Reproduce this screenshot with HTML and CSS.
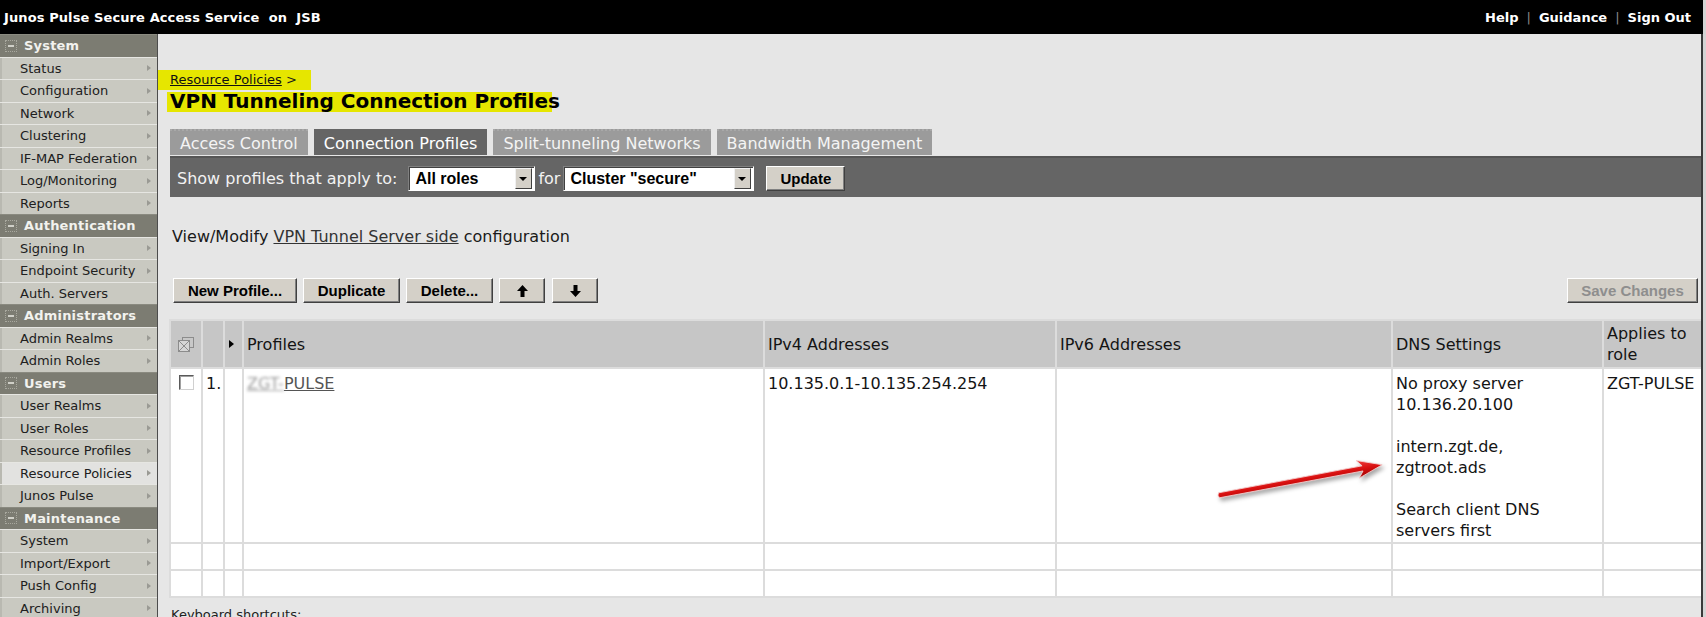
FILE: index.html
```html
<!DOCTYPE html>
<html lang="en">
<head>
<meta charset="utf-8">
<title>VPN Tunneling Connection Profiles</title>
<link rel="stylesheet" href="styles.css">
</head>
<body>
<header class="topbar">
  <div class="brand">Junos Pulse Secure Access Service&nbsp; on&nbsp; JSB</div>
  <div class="toplinks"><a href="#">Help</a><span class="sep">|</span><a href="#">Guidance</a><span class="sep">|</span><a href="#">Sign Out</a></div>
</header>
<div class="layout">
  <nav class="sidebar">
    <div class="sec"><span class="box"></span>System</div>
    <div class="item">Status<span class="caret"></span></div>
    <div class="item">Configuration<span class="caret"></span></div>
    <div class="item">Network<span class="caret"></span></div>
    <div class="item">Clustering<span class="caret"></span></div>
    <div class="item">IF-MAP Federation<span class="caret"></span></div>
    <div class="item">Log/Monitoring<span class="caret"></span></div>
    <div class="item">Reports<span class="caret"></span></div>
    <div class="sec"><span class="box"></span>Authentication</div>
    <div class="item">Signing In<span class="caret"></span></div>
    <div class="item">Endpoint Security<span class="caret"></span></div>
    <div class="item">Auth. Servers</div>
    <div class="sec"><span class="box"></span>Administrators</div>
    <div class="item">Admin Realms<span class="caret"></span></div>
    <div class="item">Admin Roles<span class="caret"></span></div>
    <div class="sec"><span class="box"></span>Users</div>
    <div class="item">User Realms<span class="caret"></span></div>
    <div class="item">User Roles<span class="caret"></span></div>
    <div class="item">Resource Profiles<span class="caret"></span></div>
    <div class="item active">Resource Policies<span class="caret"></span></div>
    <div class="item">Junos Pulse<span class="caret"></span></div>
    <div class="sec"><span class="box"></span>Maintenance</div>
    <div class="item">System<span class="caret"></span></div>
    <div class="item">Import/Export<span class="caret"></span></div>
    <div class="item">Push Config<span class="caret"></span></div>
    <div class="item">Archiving<span class="caret"></span></div>
  </nav>
  <main class="main">
    <div class="crumb"><span class="hl-crumb"><a href="#">Resource Policies</a> &gt;</span></div>
    <h1 class="title"><span class="hl-title">VPN Tunneling Connection Profiles</span></h1>
    <div class="tabs">
      <span class="tab">Access Control</span>
      <span class="tab current">Connection Profiles</span>
      <span class="tab">Split-tunneling Networks</span>
      <span class="tab">Bandwidth Management</span>
    </div>
    <div class="filterbar">
      <span class="flabel">Show profiles that apply to:</span>
      <span class="select sel-roles"><span class="sel-text">All roles</span><span class="sel-btn"></span></span>
      <span class="flabel for">for</span>
      <span class="select sel-cluster"><span class="sel-text">Cluster "secure"</span><span class="sel-btn"></span></span>
      <button class="btn update">Update</button>
    </div>
    <p class="intro">View/Modify <a href="#">VPN Tunnel Server side</a> configuration</p>
    <div class="actions">
      <div class="btn-group">
        <button class="btn">New Profile...</button>
        <button class="btn">Duplicate</button>
        <button class="btn">Delete...</button>
        <button class="btn arrow-btn"><svg width="11" height="12" viewBox="0 0 11 12"><path d="M5.5 0 L11 6 H7.5 V12 H3.5 V6 H0 Z" fill="#000"/></svg></button>
        <button class="btn arrow-btn"><svg width="11" height="12" viewBox="0 0 11 12"><path d="M5.5 12 L11 6 H7.5 V0 H3.5 V6 H0 Z" fill="#000"/></svg></button>
      </div>
      <button class="btn disabled">Save Changes</button>
    </div>
    <table class="grid">
      <thead>
        <tr>
          <th class="c-cb"><svg class="selall" width="16" height="15" viewBox="0 0 16 15"><rect x="4.5" y="0.5" width="11" height="10" fill="#c8c8c8" stroke="#8c8c8c"/><rect x="0.5" y="3.5" width="11" height="11" fill="#d6d6d6" stroke="#8c8c8c"/><path d="M1 4 L11 14 M11 4 L1 14" stroke="#8c8c8c"/></svg></th>
          <th class="c-num"></th>
          <th class="c-arr"><span class="tri"></span></th>
          <th class="c-prof">Profiles</th>
          <th class="c-v4">IPv4 Addresses</th>
          <th class="c-v6">IPv6 Addresses</th>
          <th class="c-dns">DNS Settings</th>
          <th class="c-role">Applies to role</th>
        </tr>
      </thead>
      <tbody>
        <tr class="row-main">
          <td class="c-cb"><span class="chk"></span></td>
          <td>1.</td>
          <td></td>
          <td><span class="blur">ZGT-</span><a href="#" class="plink">PULSE</a></td>
          <td>10.135.0.1-10.135.254.254</td>
          <td></td>
          <td>No proxy server<br>10.136.20.100<br><br>intern.zgt.de,<br>zgtroot.ads<br><br>Search client DNS servers first</td>
          <td>ZGT-PULSE</td>
        </tr>
        <tr class="row-empty"><td></td><td></td><td></td><td></td><td></td><td></td><td></td><td></td></tr>
        <tr class="row-empty"><td></td><td></td><td></td><td></td><td></td><td></td><td></td><td></td></tr>
      </tbody>
    </table>
    <p class="shortcuts">Keyboard shortcuts:</p>
  </main>
</div>
<svg class="annot-arrow" width="200" height="80" viewBox="0 0 200 80">
  <defs>
    <linearGradient id="ar" x1="0" y1="0" x2="0" y2="1">
      <stop offset="0" stop-color="#f04040"/>
      <stop offset="0.5" stop-color="#d81010"/>
      <stop offset="1" stop-color="#a00000"/>
    </linearGradient>
  </defs>
  <g transform="translate(19,55) rotate(-10.5)">
    <path d="M0 -2.2 L146 -2.6 L141 -9 L166 0 L141 9 L146 2.6 L0 2.8 Q-2 0 0 -2.2 Z" fill="url(#ar)" stroke="#f4d0d0" stroke-width="0.8"/>
  </g>
</svg>
</body>
</html>
```
FILE: styles.css
```css
* { box-sizing: border-box; }

html, body {
  margin: 0;
  padding: 0;
}

body {
  position: relative;
  width: 1706px;
  height: 617px;
  overflow: hidden;
  background: #d4d4d4;
  font-family: "DejaVu Sans", Verdana, sans-serif;
  color: #1a1a1a;
}

a { color: inherit; }

/* ---------- top bar ---------- */
.topbar {
  height: 34px;
  background: #000;
  color: #fff;
  display: flex;
  align-items: center;
  justify-content: space-between;
  padding: 0 12px 0 4px;
  font-weight: bold;
  font-size: 13px;
  margin-right: 3px;
}
.brand { letter-spacing: 0.1px; }
.toplinks a { color: #fff; text-decoration: none; }
.toplinks .sep { color: #8a8a8a; margin: 0 8px; font-weight: normal; }

/* ---------- layout ---------- */
.layout {
  display: flex;
  height: 583px;
}

/* ---------- sidebar ---------- */
.sidebar {
  flex: none;
  width: 158px;
  background: #c9c9c1;
  border-right: 1px solid #4c4c4c;
  overflow: hidden;
}
.sec {
  height: 22.5px;
  display: flex;
  align-items: center;
  background: #7c7c72;
  color: #f2f2ee;
  font-weight: bold;
  font-size: 13px;
  padding-left: 5px;
  letter-spacing: 0.2px;
  border-top: 1px solid #8a8a80;
}
.box {
  position: relative;
  width: 12px;
  height: 12px;
  border: 1px dotted #a8a89e;
  margin-right: 7px;
  flex: none;
}
.box::after {
  content: "";
  position: absolute;
  left: 2px;
  right: 2px;
  top: 4px;
  height: 2px;
  background: #d0d0c8;
}
.item {
  height: 22.5px;
  display: flex;
  align-items: center;
  justify-content: space-between;
  padding: 0 6px 0 20px;
  font-size: 13px;
  color: #202020;
  border-top: 1px solid #e6e6e2;
  box-shadow: inset 2px 0 0 #b9b9b1;
}
.item.active {
  background: #e2e2e0;
}
.caret {
  width: 0;
  height: 0;
  border-left: 4px solid #9a9a94;
  border-top: 3px solid transparent;
  border-bottom: 3px solid transparent;
}

/* ---------- main ---------- */
.main {
  flex: 1;
  min-width: 0;
  background: #e6e6e6;
  border-right: 2px solid #3a3a3a;
  margin-right: 3px;
  padding: 36px 0 0 12px;
  overflow: hidden;
}

.crumb {
  font-size: 13px;
  line-height: 20px;
  height: 20px;
}
.hl-crumb {
  background: #e6e600;
  padding: 2px 14px 3px 13px;
  margin-left: -13px;
}
.crumb a { color: #111; }

.title {
  margin: 0;
  font-size: 20px;
  line-height: 22px;
  font-weight: bold;
  color: #000;
}
.hl-title {
  background: linear-gradient(#e6e600, #e6e600) no-repeat;
  background-size: calc(100% - 8px) 20px;
  background-position: 0 3px;
  padding-left: 3px;
  margin-left: -3px;
}

.tabs {
  display: flex;
  gap: 6px;
  margin-top: 17px;
}
.tab {
  height: 26px;
  line-height: 26px;
  padding: 0 10px;
  font-size: 16px;
  color: #f4f4f4;
  background: #9b9b9b;
  border-top: 2px dotted #a8a8a8;
}
.tab.current {
  background: #656565;
  border-top-color: #656565;
  color: #fff;
}

.filterbar {
  margin-top: 1px;
  height: 41px;
  background: #656565;
  border-top: 2px solid #555;
  display: flex;
  align-items: center;
  padding: 1px 0 0 7px;
}
.flabel {
  color: #f2f2f2;
  font-size: 16px;
  margin-right: 11px;
}
.flabel.for { margin: 0 3px; }

.select {
  display: inline-flex;
  align-items: center;
  justify-content: space-between;
  height: 25px;
  background: #fff;
  border: 1px solid;
  border-color: #808080 #fff #fff #808080;
  box-shadow: inset 1px 1px 0 #404040;
  padding: 2px 2px 1px 6px;
}
.sel-roles { width: 127px; }
.sel-cluster { width: 191px; }
.sel-text {
  font-family: "Liberation Sans", Arial, sans-serif;
  font-weight: bold;
  font-size: 16px;
  color: #000;
}
.sel-btn {
  position: relative;
  width: 17px;
  height: 21px;
  background: #d4d0c8;
  border: 1px solid;
  border-color: #f0f0f0 #404040 #404040 #f0f0f0;
}
.sel-btn::after {
  content: "";
  position: absolute;
  left: 3px;
  top: 8px;
  border-top: 4px solid #000;
  border-left: 4px solid transparent;
  border-right: 4px solid transparent;
}

.btn {
  height: 25px;
  padding: 0 13px;
  font-family: "Liberation Sans", Arial, sans-serif;
  font-weight: bold;
  font-size: 15px;
  color: #000;
  background: #d4d0c8;
  border: 1px solid;
  border-color: #fff #404040 #404040 #fff;
  box-shadow: inset -1px -1px 0 #808080;
  border-radius: 0;
  cursor: default;
}
.btn.update { margin-left: 12px; width: 79px; padding: 0; }
.btn.disabled { color: #8e8e8e; width: 131px; padding: 0; }

.intro {
  margin: 30px 0 0 2px;
  font-size: 16px;
  line-height: 20px;
  color: #1a1a1a;
}
.intro a { color: #333; }

.actions {
  margin-top: 31px;
  display: flex;
  justify-content: space-between;
  padding: 0 3px 0 3px;
}
.btn-group { display: flex; gap: 6px; }
.btn-group .btn:nth-child(1) { width: 124px; padding: 0; }
.btn-group .btn:nth-child(2) { width: 97px; padding: 0; }
.btn-group .btn:nth-child(3) { width: 87px; padding: 0; }
.arrow-btn {
  width: 46px;
  padding: 0;
  display: flex;
  align-items: center;
  justify-content: center;
}
.btn-group .arrow-btn:last-child { margin-left: 1px; }

/* ---------- table ---------- */
.grid {
  margin: 16px 0 0 -1px;
  width: calc(100% + 4px);
  table-layout: fixed;
  border-collapse: separate;
  border-spacing: 2px;
  background: #dcdcdc;
  font-size: 16px;
  color: #141414;
}
.grid th, .grid td {
  box-sizing: border-box;
  padding: 0 3px;
  text-align: left;
  font-weight: normal;
}
.grid th {
  height: 46px;
  background: #c6c6c6;
  vertical-align: middle;
  line-height: 21px;
}
.c-cb { width: 30px; }
.c-num { width: 20px; }
.c-arr { width: 17px; }
.c-prof { width: 519px; }
.c-v4 { width: 290px; }
.c-v6 { width: 334px; }
.c-dns { width: 209px; }
.grid th.c-cb { padding: 0 0 0 7px; }
.selall { display: block; }
.grid th.c-arr { padding: 0 0 0 4px; }
.tri {
  display: block;
  width: 0;
  height: 0;
  border-left: 5px solid #000;
  border-top: 4px solid transparent;
  border-bottom: 4px solid transparent;
}
.grid td {
  background: #fff;
  vertical-align: top;
  line-height: 21px;
}
.row-main td {
  height: 173px;
  padding-top: 4px;
}
.row-main td.c-cb { padding: 6px 0 0 8px; }
.chk {
  display: block;
  width: 15px;
  height: 15px;
  background: #fff;
  border: 1px solid;
  border-color: #5a5a5a #d0d0d0 #d0d0d0 #5a5a5a;
  box-shadow: inset 1px 1px 0 #a0a0a0;
}
.row-empty td { height: 25px; }

.blur {
  color: #9a9a9a;
  filter: blur(1.4px);
  display: inline-block;
  text-decoration: underline;
}
.plink { color: #555; }

.shortcuts {
  margin: 9px 0 0 1px;
  font-size: 13px;
  line-height: 16px;
  color: #222;
}

/* ---------- annotation arrow ---------- */
.annot-arrow {
  position: absolute;
  left: 1200px;
  top: 440px;
  filter: drop-shadow(2px 3px 2px rgba(0, 0, 0, 0.35));
}
```
